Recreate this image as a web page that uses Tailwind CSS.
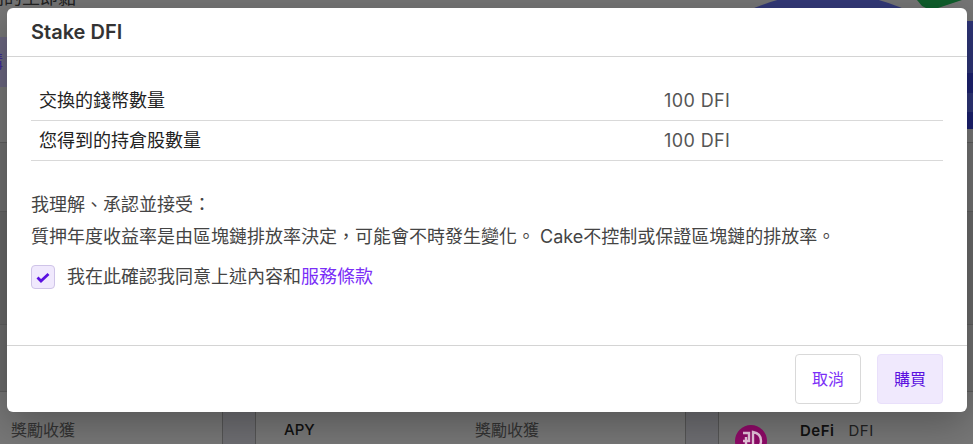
<!DOCTYPE html>
<html>
<head>
  <title>Stake DFI</title>
  <script src="https://cdn.jsdelivr.net/npm/@tailwindcss/browser@4"></script>
</head>
<body class="overflow-hidden bg-[#777777] font-['Inter','Noto_Sans_CJK_TC',sans-serif] text-[#333]">
  <div class="relative h-[444px] w-[973px] overflow-hidden">
    <!-- page behind the dialog, dimmed by the backdrop -->
    <svg class="absolute left-0 top-0" width="973" height="8" viewBox="0 0 973 8">
      <circle cx="828" cy="181" r="188" fill="#343a7a"/>
      <polygon points="917,0 922,6 926,8 938,8 962,0" fill="#0f5f2c"/>
    </svg>
    <div class="absolute left-[-14px] top-[-14px] whitespace-nowrap text-lg leading-6 text-[#222]">利的生即黏。</div>

    <!-- left edge of the page -->
    <div class="absolute left-0 top-0 flex h-[444px] w-[7px] flex-col">
      <div class="h-[37px]"></div>
      <div class="relative h-[50px] overflow-hidden bg-[#6b6780]"><span class="absolute left-[-15px] top-[13px] text-lg leading-6 text-[#3f2a9c]">購</span></div>
      <div class="h-[56px] border-b border-[#5f5f5f]"></div>
      <div class="h-[69px] border-b border-[#5f5f5f] bg-[#6f6f6f]"></div>
      <div class="h-[113px] border-b border-[#5f5f5f] bg-[#676767]"></div>
      <div class="h-[67px] border-b border-[#5f5f5f] bg-[#6b6b6b]"></div>
    </div>

    <!-- right edge of the page -->
    <div class="absolute left-[967px] top-0 flex h-[444px] w-[6px] flex-col">
      <div class="h-[21px]"></div>
      <div class="h-[52px] bg-[#2f3679]"></div>
      <div class="h-[20px] bg-[#1e2372]"></div>
      <div class="h-[19px] bg-[#2f3679]"></div>
      <div class="h-[17px] bg-[#1c2170]"></div>
      <div class="h-[14px] border-b border-[#5f5f5f]"></div>
      <div class="h-[69px] border-b border-[#5f5f5f] bg-[#727272]"></div>
      <div class="h-[113px] border-b border-[#5f5f5f] bg-[#6a6a6a]"></div>
      <div class="h-[67px] border-b border-[#5f5f5f] bg-[#707070]"></div>
    </div>

    <!-- bottom of the cards -->
    <div class="absolute left-[222px] top-[412px] h-[32px] w-[34px] border-x border-[#555] bg-[#6e6e72]"></div>
    <div class="absolute left-[685px] top-[412px] h-[32px] w-[34px] border-x border-[#555] bg-[#6e6e72]"></div>
    <div class="absolute left-[11px] top-[420px] text-base leading-5 text-[#333]">獎勵收獲</div>
    <div class="absolute left-[284px] top-[420px] text-[15px] font-medium leading-5 text-[#111]">APY</div>
    <div class="absolute left-[475px] top-[420px] text-base leading-5 text-[#333]">獎勵收獲</div>
    <div class="absolute left-[735px] top-[425px] h-8 w-8 rounded-full bg-[#8f0a68]">
      <svg viewBox="0 0 32 32" class="h-8 w-8" fill="none" stroke="#e9c6de" stroke-width="2.4"><path d="M8 8h6v8H8M11 12v12M8 24h6M18 7c6 1 8 5 8 9s-3 8-8 9zM18 12v8"/></svg>
    </div>
    <div class="absolute left-[800px] top-[421px] flex gap-[14px] text-[15px] leading-5 tracking-[0.5px] text-[#111]"><span class="font-semibold">DeFi</span><span class="text-[#222]">DFI</span></div>

    <!-- dialog -->
    <div class="absolute left-[7px] top-2 flex h-[404px] w-[960px] flex-col rounded-md bg-white shadow-[0_10px_40px_rgba(0,0,0,0.3)]">
      <div class="flex h-[49px] items-center border-b border-[#d4d4d4] px-6">
        <h1 class="text-xl font-semibold text-[#333]">Stake DFI</h1>
      </div>
      <div class="flex flex-1 flex-col px-6 pt-6">
        <div class="flex h-10 items-center border-b border-[#d9d9d9] pl-2">
          <div class="w-[625px] text-lg text-[#222]">交換的錢幣數量</div>
          <div class="text-lg tracking-[0.4px] text-[#555]">100 DFI</div>
        </div>
        <div class="flex h-10 items-center border-b border-[#d9d9d9] pl-2">
          <div class="w-[625px] text-lg text-[#222]">您得到的持倉股數量</div>
          <div class="text-lg tracking-[0.4px] text-[#555]">100 DFI</div>
        </div>
        <p class="mt-[28px] whitespace-nowrap text-lg leading-8 text-[#444]">我理解、承認並接受：<br>質押年度收益率是由區塊鏈排放率決定，可能會不時發生變化。 Cake不控制或保證區塊鏈的排放率。</p>
        <label class="mt-[10px] flex items-center gap-3 text-lg text-[#444]">
          <span class="flex h-6 w-6 items-center justify-center rounded border border-[#cfc4e8] bg-[#f0e9fd]">
            <svg viewBox="0 0 16 16" class="h-4 w-4" fill="none" stroke="#5a10e0" stroke-width="2.8"><path d="M2.5 8.5l3.5 3.5 7.5-7"/></svg>
          </span>
          <span>我在此確認我同意上述內容和<a class="text-[#7b2ff7]">服務條款</a></span>
        </label>
      </div>
      <div class="flex h-[67px] items-center justify-end gap-4 border-t border-[#d4d4d4] px-6">
        <button class="h-[50px] w-[66px] rounded border border-[#d9d9d9] bg-white text-base text-[#7b2ff7]">取消</button>
        <button class="h-[50px] w-[66px] rounded border border-[#e9e0fb] bg-[#f0e9fd] text-base text-[#5a10e0]">購買</button>
      </div>
    </div>
  </div>
</body>
</html>
